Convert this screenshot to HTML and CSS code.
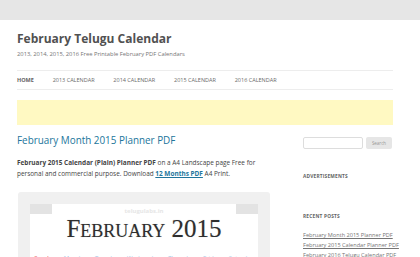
FILE: index.html
```html
<!DOCTYPE html>
<html lang="en">
<head>
    <meta charset="UTF-8">
    <meta name="viewport" content="width=device-width, initial-scale=1.0">
    <title>February Telugu Calendar</title>
    <link rel="stylesheet" href="styles.css">
</head>
<body>

<div class="topbar"></div>

<div class="site">
    <header class="site-header">
        <h1 class="site-title">February Telugu Calendar</h1>
        <p class="site-desc">2013, 2014, 2015, 2016 Free Printable February PDF Calendars</p>

        <nav class="main-nav">
            <a href="#" class="current">Home</a>
            <a href="#">2013 Calendar</a>
            <a href="#">2014 Calendar</a>
            <a href="#">2015 Calendar</a>
            <a href="#">2016 Calendar</a>
        </nav>

        <!-- ad slot -->
        <div class="ad-banner"></div>
    </header>

    <div class="wrap">
        <main class="content">
            <h2 class="entry-title"><a href="#">February Month 2015 Planner PDF</a></h2>
            <p class="entry-text"><b>February 2015 Calendar (Plain) Planner PDF</b> on a A4 Landscape page Free for personal and commercial purpose. Download <a href="#">12 Months PDF</a> A4 Print.</p>

            <div class="cal-frame">
                <div class="cal-page">
                    <div class="cal-tabs">
                        <span class="tab"></span>
                        <span class="watermark">telugulabs.in</span>
                        <span class="tab"></span>
                    </div>
                    <div class="cal-month">February 2015</div>
                    <div class="cal-days">
                        <span class="sun">Sunday</span>
                        <span>Monday</span>
                        <span>Tuesday</span>
                        <span>Wednesday</span>
                        <span>Thursday</span>
                        <span>Friday</span>
                        <span>Saturday</span>
                    </div>
                </div>
            </div>
        </main>

        <aside class="sidebar">
            <form class="search-form">
                <input type="text">
                <button type="button">Search</button>
            </form>

            <h3 class="widget-title">Advertisements</h3>

            <h3 class="widget-title recent">Recent Posts</h3>
            <ul class="recent-posts">
                <li><a href="#">February Month 2015 Planner PDF</a></li>
                <li><a href="#">February 2015 Calendar Planner PDF</a></li>
                <li><a href="#">February 2016 Telugu Calendar PDF</a></li>
            </ul>
        </aside>
    </div>
</div>

</body>
</html>
```

FILE: styles.css
```css
body {
    margin: 0;
    font-family: 'Open Sans', 'Liberation Sans', sans-serif;
    color: #444;
    background-color: #fff;
    overflow: hidden;
}

.topbar {
    height: 20px;
    background-color: #e6e6e6;
}

.site {
    padding: 0 27px 0 17px;
}

.site-title {
    margin: 12px 0 0;
    font-size: 12px;
    line-height: 14px;
    font-weight: bold;
    color: #515151;
}

.site-desc {
    margin: 4px 0 0;
    font-size: 5.8px;
    line-height: 9px;
    color: #757575;
}

.main-nav {
    margin-top: 11px;
    border-top: 1px solid #ededed;
    border-bottom: 1px solid #ededed;
    height: 18px;
    display: flex;
    align-items: center;
}

.main-nav a {
    font-size: 5.5px;
    text-transform: uppercase;
    text-decoration: none;
    color: #6a6a6a;
    margin-right: 18.8px;
}

.main-nav a.current {
    color: #636363;
    font-weight: bold;
}

.ad-banner {
    margin-top: 10px;
    height: 25px;
    background-color: #fff9c2;
}

.wrap {
    display: flex;
}

.content {
    width: 252px;
    margin-right: 34px;
}

.entry-title {
    margin: 9px 0 0;
    font-size: 9.9px;
    line-height: 13px;
    font-weight: normal;
}

.entry-title a {
    color: #21759b;
    text-decoration: none;
}

.entry-text {
    margin: 10px 0 0;
    font-size: 6.45px;
    line-height: 11px;
    color: #444;
}

.entry-text a {
    color: #21759b;
    font-weight: bold;
}

.cal-frame {
    margin: 13px 0 0 1px;
    width: 252px;
    height: 80px;
    background-color: #f0f0f0;
    border-radius: 3px;
    padding: 12px 12px 0;
    box-sizing: border-box;
}

.cal-page {
    background-color: #fff;
    height: 100%;
}

.cal-tabs {
    display: flex;
    justify-content: space-between;
    align-items: flex-start;
}

.cal-tabs .tab {
    width: 22px;
    height: 10px;
    background-color: #e3e3e3;
}

.watermark {
    font-size: 6px;
    line-height: 14px;
    font-weight: bold;
    color: #e6e6e6;
}

.cal-month {
    margin-top: -2px;
    text-align: center;
    font-family: 'Liberation Serif', serif;
    font-variant: small-caps;
    font-size: 25px;
    line-height: 26px;
    color: #2e2e2e;
    text-shadow: 0 0 1px rgba(0, 0, 0, 0.25);
}

.cal-days {
    margin-top: 12px;
    display: flex;
    justify-content: space-around;
    font-size: 6px;
    color: #a9c8e6;
}

.cal-days .sun {
    color: #e6393d;
}

.sidebar {
    flex: 1;
    min-width: 0;
}

.search-form {
    margin-top: 12px;
    display: flex;
    gap: 3px;
}

.search-form input {
    width: 60px;
    height: 12px;
    box-sizing: border-box;
    border: 1px solid #ddd;
    border-radius: 2px;
    padding: 0;
    margin: 0;
}

.search-form button {
    width: 26px;
    height: 12px;
    margin: 0;
    padding: 0;
    border: none;
    border-radius: 2px;
    background-color: #e6e6e6;
    font-family: 'Open Sans', sans-serif;
    font-size: 4.5px;
    color: #999;
}

.widget-title {
    margin: 24px 0 0;
    font-size: 4.8px;
    line-height: 6px;
    font-weight: bold;
    text-transform: uppercase;
    color: #636363;
    letter-spacing: 0.2px;
}

.widget-title.recent {
    margin-top: 34px;
}

.recent-posts {
    list-style: none;
    margin: 11px 0 0;
    padding: 0;
}

.recent-posts li {
    font-size: 5.6px;
    line-height: 10px;
    white-space: nowrap;
}

.recent-posts a {
    color: #757575;
}
```
